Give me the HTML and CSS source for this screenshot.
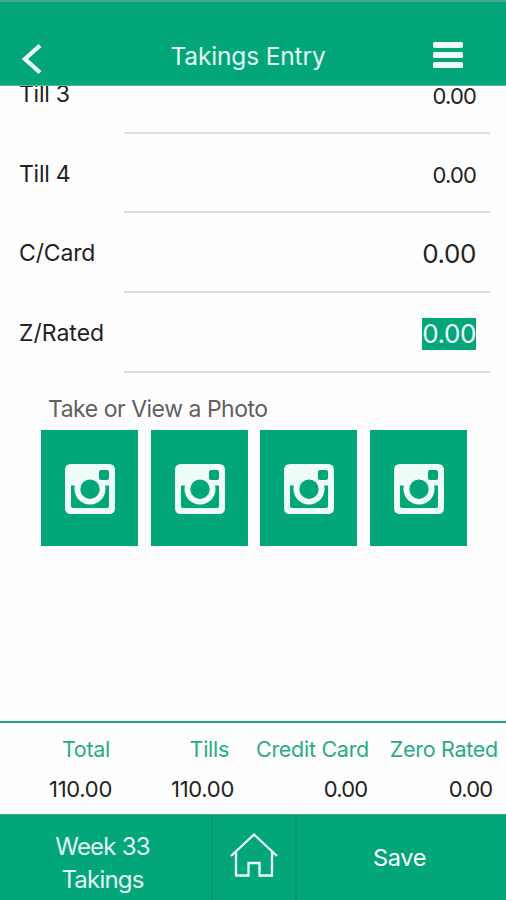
FILE: index.html
```html
<!DOCTYPE html>
<html lang="en">
<head>
<meta charset="utf-8">
<title>Takings Entry</title>
<link rel="stylesheet" href="styles.css">
</head>
<body>
<svg class="defs" width="0" height="0" aria-hidden="true">
  <symbol id="camera" viewBox="0 0 50 50">
    <path fill="#effdf9" fill-rule="evenodd" d="M6 0H44Q50 0 50 6V44Q50 50 44 50H6Q0 50 0 44V6Q0 0 6 0ZM36 6Q34 6 34 8V14Q34 16 36 16H42Q44 16 44 14V8Q44 6 42 6ZM6 21.5V42Q6 44 8 44H42Q44 44 44 42V21.5H40.1A15.5 15.5 0 1 1 9.9 21.5ZM25 15.5A9.7 9.7 0 1 0 25 34.9A9.7 9.7 0 1 0 25 15.5Z"/>
  </symbol>
</svg>
<div class="app">
  <header class="header">
    <svg class="back" viewBox="0 0 20 32"><path d="M18 2.500L3 16L18 29.500"/></svg>
    <h1 class="title">Takings Entry</h1>
    <div class="menu"><i></i><i></i><i></i></div>
  </header>
  <main class="content">
    <div class="rows">
      <div class="row"><span class="label till">Till 3</span><span class="field"><span class="value">0.00</span></span></div>
      <div class="row"><span class="label till">Till 4</span><span class="field"><span class="value">0.00</span></span></div>
      <div class="row"><span class="label card">C/Card</span><span class="field"><span class="value large">0.00</span></span></div>
      <div class="row"><span class="label rated">Z/Rated</span><span class="field"><span class="value large selected">0.00</span></span></div>
    </div>
    <div class="caption">Take or View a Photo</div>
    <div class="photos">
      <div class="photo"><svg><use href="#camera"/></svg></div>
      <div class="photo"><svg><use href="#camera"/></svg></div>
      <div class="photo"><svg><use href="#camera"/></svg></div>
      <div class="photo"><svg><use href="#camera"/></svg></div>
    </div>
  </main>
  <section class="totals">
    <div class="total"><span class="name total-name">Total</span><span class="sum">110.00</span></div>
    <div class="total"><span class="name tills-name">Tills</span><span class="sum">110.00</span></div>
    <div class="total"><span class="name credit-name">Credit Card</span><span class="sum zero">0.00</span></div>
    <div class="total"><span class="name zero-name">Zero Rated</span><span class="sum zero">0.00</span></div>
  </section>
  <footer class="footer">
    <div class="week"><span class="week-no">Week 33</span><span class="week-type">Takings</span></div>
    <div class="home"><svg viewBox="0 0 50 46"><path d="M2 24L25 2.5L48 24M7 19.5V43.5H19.500V31H30.500V43.500H43V19.500"/></svg></div>
    <div class="save">Save</div>
  </footer>
</div>
</body>
</html>
```
FILE: styles.css
```css
* { box-sizing: border-box; }
body {
  margin: 0;
  font-family: Inter, "Liberation Sans", sans-serif;
  font-weight: 400;
  color: #222;
  background: #fefefe;
}
.defs { display: block; }
.app { display: flex; flex-direction: column; height: 900px; overflow: hidden; }

.header {
  flex: none;
  height: 86px;
  display: grid;
  grid-template-columns: 90px 1fr 90px;
  align-items: start;
  background: #02a679;
  border-top: 2px solid #45aa8a;
  border-bottom: 1px solid #4dbd9c;
  color: #e4f8f1;
}
.back { width: 20px; height: 32px; margin: 41px 0 0 21.500px; fill: none; stroke: #effdf9; stroke-width: 4.2; }
.title { margin: 38px 0 0; padding-right: 10px; font-size: 24.5px; line-height: 32px; font-weight: 400; text-align: center; letter-spacing: -.15px; white-space: nowrap; }
.menu { display: grid; gap: 4px; width: 30px; margin: 40px 0 0 17px; }
.menu i { height: 6px; border-radius: 1.5px; background: #effdf9; }

.content { flex: 1; min-height: 0; overflow: hidden; }
.rows { margin-top: -32px; }
.row { display: flex; height: 79.700px; }
.label { width: 124px; padding: 25px 0 0 19px; font-size: 23px; line-height: 30px; white-space: nowrap; }
.till { letter-spacing: -.25px; }
.card { letter-spacing: -.15px; }
.rated { letter-spacing: 0; }
.field { width: 366px; border-bottom: 2px solid #dedede; padding: 25px 14px 0 0; display: flex; justify-content: flex-end; align-items: flex-start; }
.value { margin-top: 1.500px; font-size: 22px; line-height: 30px; letter-spacing: -.85px; }
.large { margin-top: 0; font-size: 26px; line-height: 32px; letter-spacing: -.4px; }
.selected { background: #02a679; color: #effdf9; }
.caption { padding: 21px 0 0 48px; font-size: 23px; line-height: 30px; letter-spacing: -.48px; color: #606060; white-space: nowrap; }
.photos { display: grid; grid-template-columns: repeat(4, 97px); column-gap: 12.600px; padding: 6px 0 0 41px; }
.photo { height: 116.500px; background: #02a679; padding: 34px 0 0 24px; }
.photo svg { display: block; width: 50px; height: 50px; }

.totals {
  flex: none;
  height: 93px;
  display: grid;
  grid-template-columns: 112px 122px 135px 137px;
  border-top: 2px solid #21a67d;
}
.total { display: flex; flex-direction: column; align-items: flex-end; white-space: nowrap; }
.name { margin-top: 10.500px; color: #27ac84; font-size: 21.500px; line-height: 30px; letter-spacing: -.28px; }
.total-name { margin-right: 2px; }
.tills-name { margin-right: 5px; }
.zero-name { margin-right: 8px; }
.sum { margin-top: 11.500px; font-size: 22px; line-height: 28px; letter-spacing: -.3px; }
.zero { margin-right: 1.500px; letter-spacing: -.75px; }
.total:last-child .sum { margin-right: 13.500px; }

.footer { flex: none; height: 86px; display: grid; grid-template-columns: 213px 84px 209px; background: #02a679; border-top: 1px solid #45aa8a; color: #e4f8f1; font-size: 24px; }
.week { display: flex; flex-direction: column; align-items: center; padding-top: 15px; padding-right: 6px; line-height: 33px; letter-spacing: -.8px; border-right: 2px solid #05966c; }
.home { border-right: 2px solid #05966c; padding: 17px 0 0 16px; }
.home svg { display: block; width: 50px; height: 46px; fill: none; stroke: #effdf9; stroke-width: 2.300; }
.save { padding: 27px 4px 0 0; text-align: center; line-height: 32px; font-size: 23.500px; font-weight: 400; letter-spacing: -.3px; color: #fff; }
```
